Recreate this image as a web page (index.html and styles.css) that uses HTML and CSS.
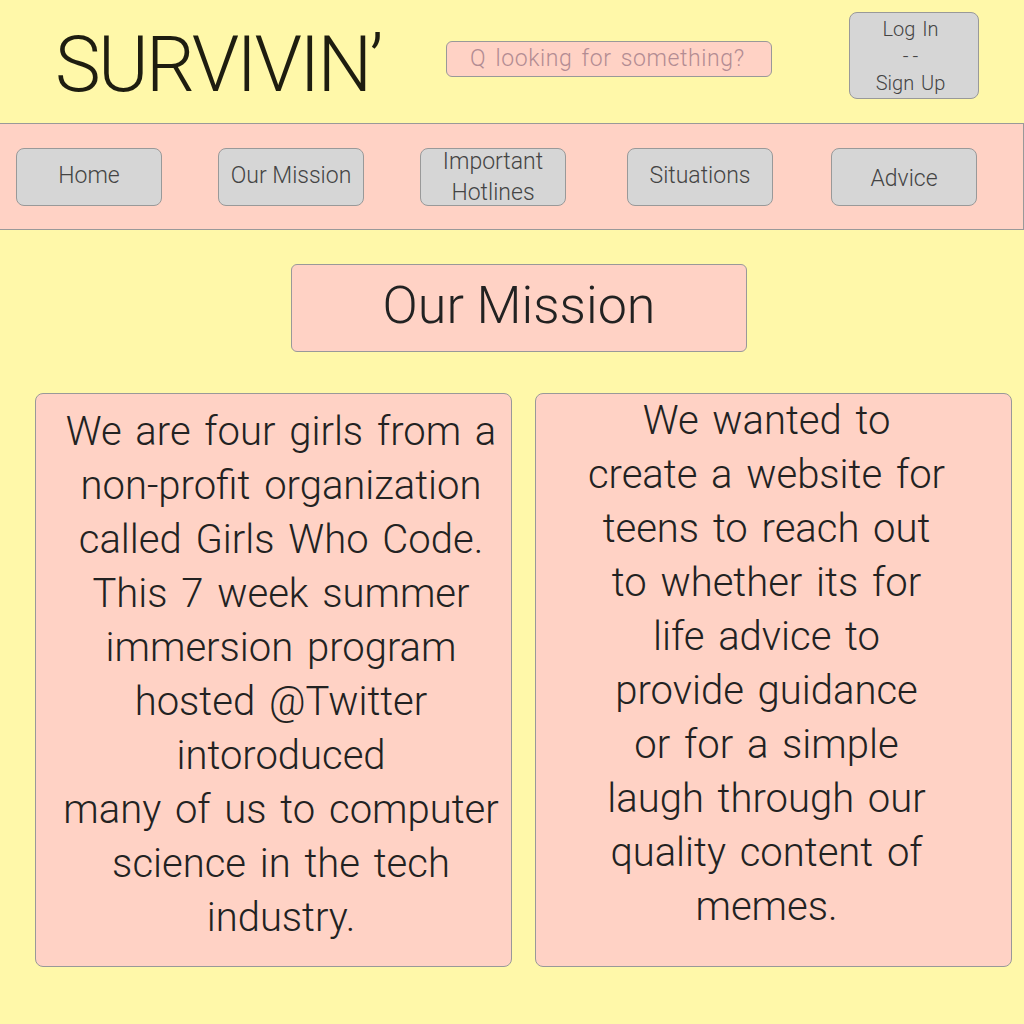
FILE: index.html
```html
<!DOCTYPE html>
<html>
<head>
<meta charset="utf-8">
<link rel="stylesheet" href="styles.css">
</head>
<body>
<header class="top">
  <div class="logo">SURVIVIN’</div>
  <div class="search">Q looking for something?</div>
  <div class="auth">Log In<br><span class="dash">--</span><br>Sign Up</div>
</header>
<nav class="nav">
  <div class="btn">Home</div>
  <div class="btn">Our Mission</div>
  <div class="btn two">Important<br>Hotlines</div>
  <div class="btn">Situations</div>
  <div class="btn low">Advice</div>
</nav>
<div class="title">Our Mission</div>
<section class="cards">
  <div class="card left">We are four girls from a<br>non-profit organization<br>called Girls Who Code.<br>This 7 week summer<br>immersion program<br>hosted @Twitter<br>intoroduced<br>many of us to computer<br>science in the tech<br>industry.</div>
  <div class="card right">We wanted to<br>create a website for<br>teens to reach out<br>to whether its for<br>life advice to<br>provide guidance<br>or for a simple<br>laugh through our<br>quality content of<br>memes.</div>
</section>
</body>
</html>
```
FILE: styles.css
```css
html, body {
  margin: 0;
  padding: 0;
  background: #fff8a9;
  font-family: Roboto, "Liberation Sans", sans-serif;
  font-weight: 300;
  color: #222;
}
.top {
  height: 123px;
  display: flex;
  align-items: flex-start;
  box-sizing: border-box;
}
.logo {
  margin-left: 55px;
  margin-top: 22px;
  width: 336px;
  font-size: 77px;
  line-height: 86px;
  color: #1e1d10;
  letter-spacing: -2.6px;
}
.search {
  margin-left: 55px;
  margin-top: 41px;
  width: 326px;
  height: 36px;
  box-sizing: border-box;
  background: #ffd2c5;
  border: 1px solid #999;
  border-radius: 6px;
  color: #b38c93;
  font-size: 23px;
  line-height: 33px;
  padding-left: 23px;
  letter-spacing: 0.6px;
  word-spacing: 3px;
}
.auth {
  margin-left: 77px;
  margin-top: 12px;
  width: 130px;
  height: 87px;
  box-sizing: border-box;
  background: #d6d6d6;
  border: 1px solid #999;
  border-radius: 8px;
  text-align: center;
  font-size: 20px;
  line-height: 27px;
  padding: 3px 7px 0 0;
  color: #444;
  word-spacing: 2px;
}
.dash {
  letter-spacing: 4px;
  margin-right: -4px;
}
.nav {
  height: 107px;
  box-sizing: border-box;
  background: #ffd2c5;
  border-top: 1px solid #999;
  border-bottom: 1px solid #999;
  border-right: 1px solid #999;
  display: flex;
  align-items: flex-start;
  padding: 24px 0 0 16px;
}
.btn {
  flex-shrink: 0;
  width: 146px;
  height: 58px;
  box-sizing: border-box;
  background: #d6d6d6;
  border: 1px solid #999;
  border-radius: 8px;
  display: flex;
  align-items: center;
  justify-content: center;
  text-align: center;
  font-size: 23px;
  color: #444;
  margin-right: 56px;
  padding-bottom: 3px;
}
.btn.two {
  line-height: 31px;
  margin-right: 61px;
  padding-bottom: 1px;
}
.btn:nth-child(4) {
  margin-right: 58px;
}
.btn.low {
  padding-top: 3px;
  padding-bottom: 0;
  margin-right: 0;
}
.title {
  margin: 34px 0 0 291px;
  width: 456px;
  height: 88px;
  box-sizing: border-box;
  background: #ffd2c5;
  border: 1px solid #999;
  border-radius: 6px;
  text-align: center;
  font-size: 52px;
  line-height: 82px;
  color: #222;
}
.cards {
  display: flex;
  gap: 23px;
  margin: 41px 0 0 35px;
}
.card {
  width: 477px;
  height: 574px;
  box-sizing: border-box;
  background: #ffd2c5;
  border: 1px solid #999;
  border-radius: 8px;
  text-align: center;
  font-size: 40px;
  line-height: 54px;
  color: #222;
  word-spacing: 4px;
}
.card.left {
  padding-top: 11px;
  padding-left: 15px;
}
.card.right {
  padding-right: 14px;
}
```
